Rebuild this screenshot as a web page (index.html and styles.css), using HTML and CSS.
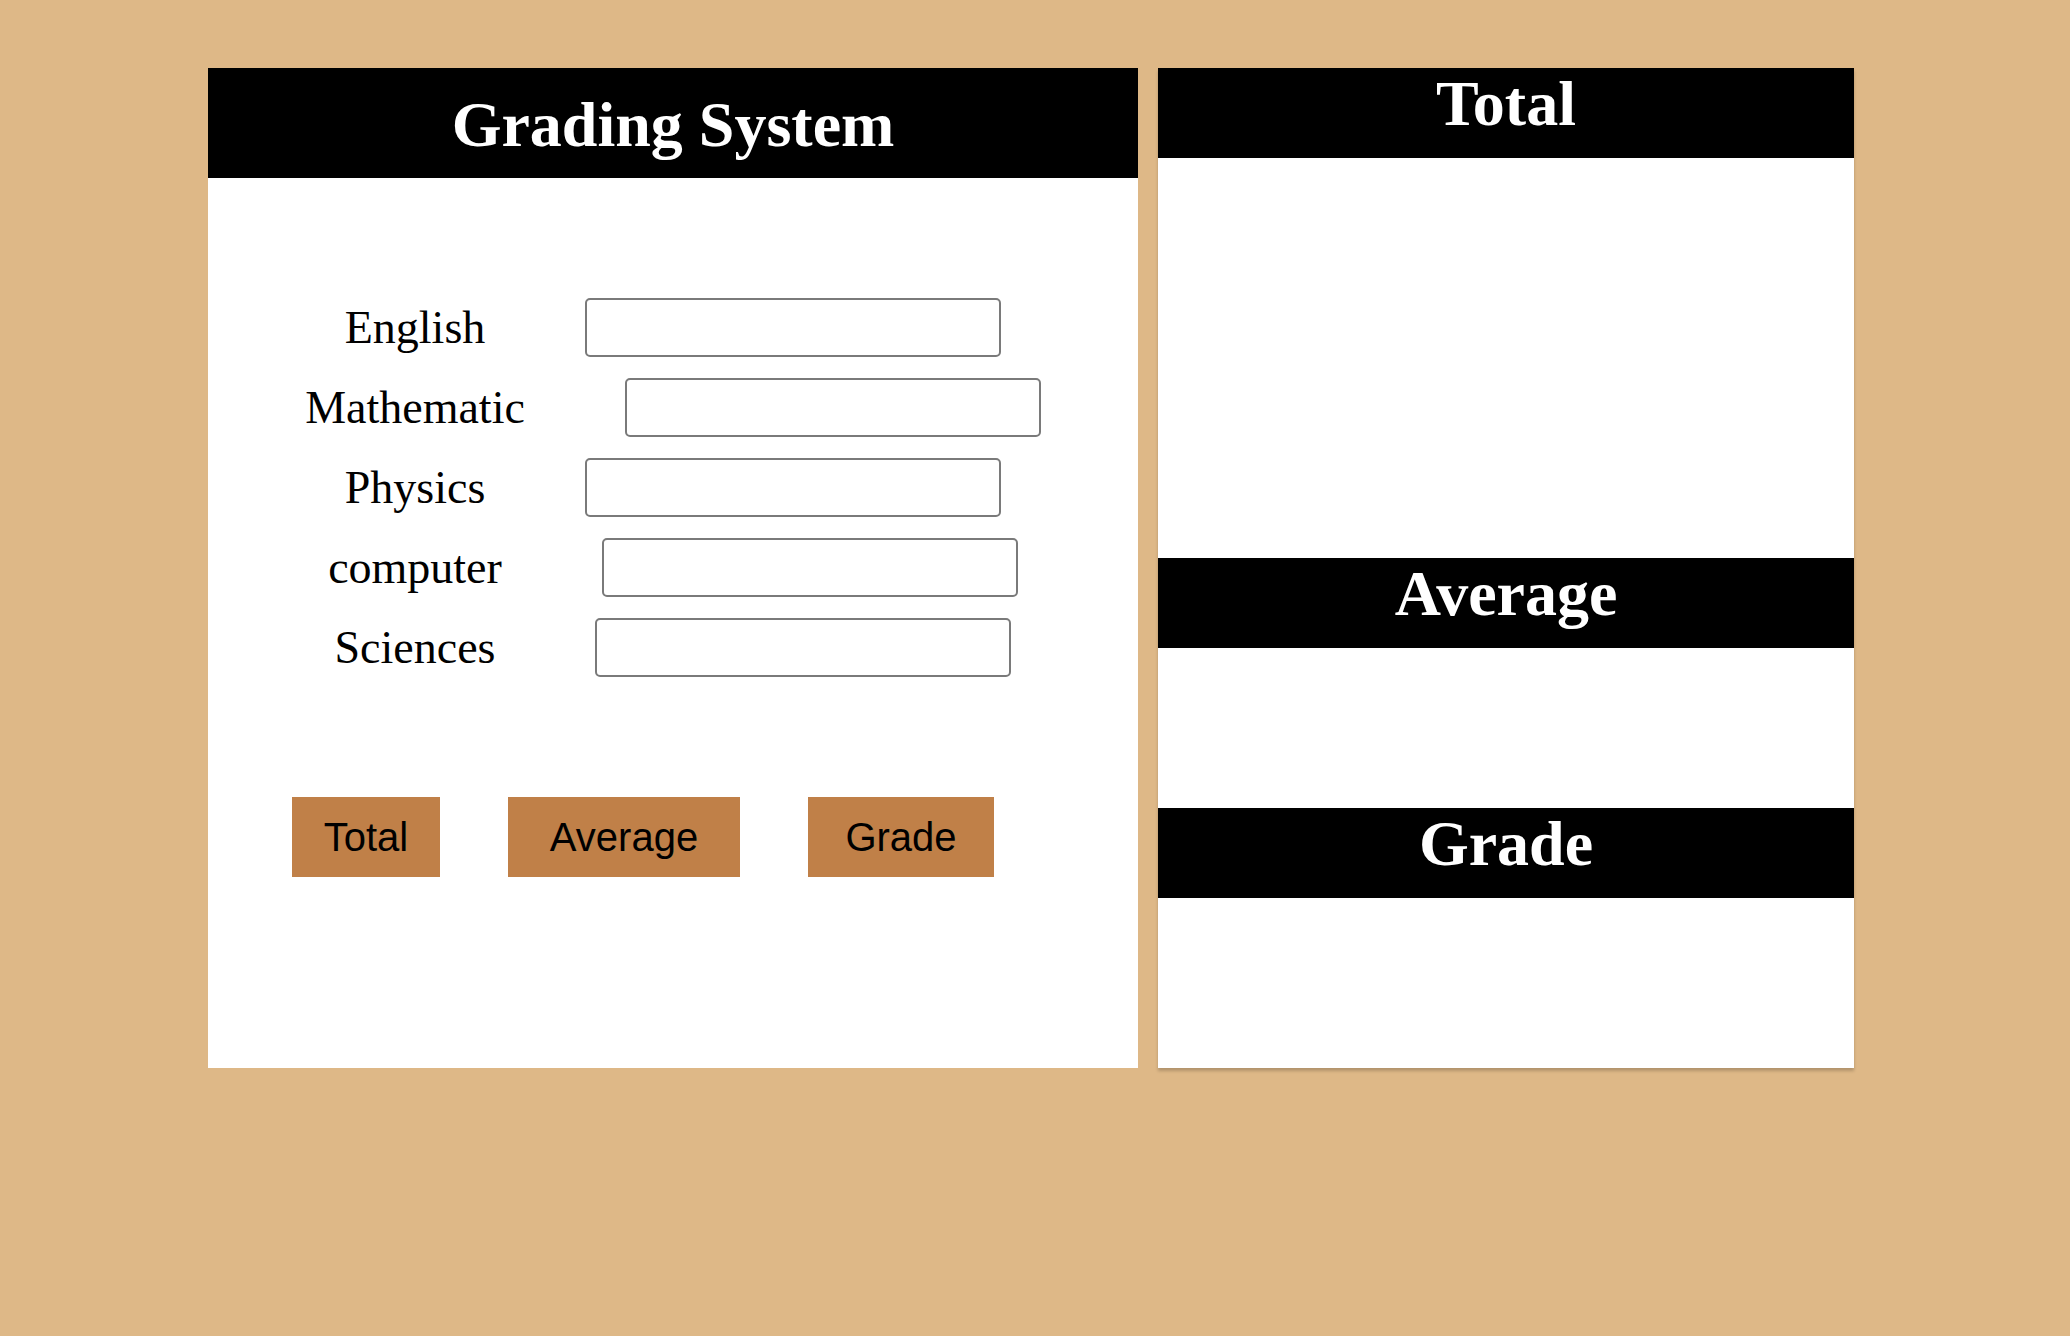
FILE: index.html
```html
<!DOCTYPE html>
<html lang="en">
<head>
<meta charset="utf-8">
<title>Grading System</title>
<link rel="stylesheet" href="styles.css">
</head>
<body>
<div class="page">
  <section class="grader">
    <h1 class="grader-title">Grading System</h1>
    <form class="grader-form">
      <div class="field"><label class="field-label" for="english">English</label><input class="field-input" id="english" type="text"></div>
      <div class="field"><label class="field-label" for="math">Mathematic</label><input class="field-input" id="math" type="text"></div>
      <div class="field"><label class="field-label" for="physics">Physics</label><input class="field-input" id="physics" type="text"></div>
      <div class="field"><label class="field-label" for="computer">computer</label><input class="field-input" id="computer" type="text"></div>
      <div class="field"><label class="field-label" for="sciences">Sciences</label><input class="field-input" id="sciences" type="text"></div>
      <div class="actions">
        <button type="button" class="btn btn-total">Total</button>
        <button type="button" class="btn btn-average">Average</button>
        <button type="button" class="btn btn-grade">Grade</button>
      </div>
    </form>
  </section>
  <aside class="results">
    <h2 class="results-title">Total</h2>
    <div class="results-body results-body-total"></div>
    <h2 class="results-title">Average</h2>
    <div class="results-body results-body-average"></div>
    <h2 class="results-title">Grade</h2>
    <div class="results-body results-body-grade"></div>
  </aside>
</div>
</body>
</html>
```

FILE: styles.css
```css
html, body {
  margin: 0;
  padding: 0;
}

body {
  background: #deb887;
  font-family: "Liberation Serif", "Times New Roman", serif;
  min-height: 1336px;
}

.page {
  display: flex;
  align-items: flex-start;
  gap: 20px;
  padding: 68px 0 0 208px;
}

.grader {
  width: 930px;
  height: 1000px;
  background: #fff;
}

.grader-title {
  margin: 0;
  height: 110px;
  box-sizing: border-box;
  padding-top: 20px;
  background: #000;
  color: #fff;
  font-size: 64px;
  font-weight: bold;
  line-height: 74px;
  text-align: center;
}

.grader-form {
  display: flex;
  flex-direction: column;
  padding-top: 120px;
}

.field {
  display: flex;
  justify-content: center;
  align-items: center;
  gap: 100px;
  height: 59px;
  margin-bottom: 21px;
}

.field-label {
  font-size: 46px;
  color: #000;
  line-height: normal;
}

.field-input {
  width: 416px;
  height: 59px;
  box-sizing: border-box;
  border: 2px solid #7a7a7a;
  border-radius: 5px;
  background: #fff;
  margin: 0;
  padding: 0 6px;
  font-size: 26px;
}

.actions {
  display: flex;
  gap: 68px;
  padding-left: 84px;
  margin-top: 99px;
}

.btn {
  height: 80px;
  border: none;
  margin: 0;
  padding: 0;
  background: #c08048;
  color: #000;
  font-family: "Liberation Sans", Arial, sans-serif;
  font-size: 40px;
  cursor: pointer;
}

.btn-total { width: 148px; }
.btn-average { width: 232px; }
.btn-grade { width: 186px; }

.results {
  width: 696px;
  height: 1000px;
  display: flex;
  flex-direction: column;
  background: #fff;
  box-shadow: 0 3px 3px rgba(0, 0, 0, 0.2);
}

.results-title {
  margin: 0;
  height: 90px;
  flex: none;
  background: #000;
  color: #fff;
  font-size: 64px;
  font-weight: bold;
  line-height: 72px;
  text-align: center;
}

.results-body-total { height: 400px; flex: none; }
.results-body-average { height: 160px; flex: none; }
.results-body-grade { flex: 1; }
```
